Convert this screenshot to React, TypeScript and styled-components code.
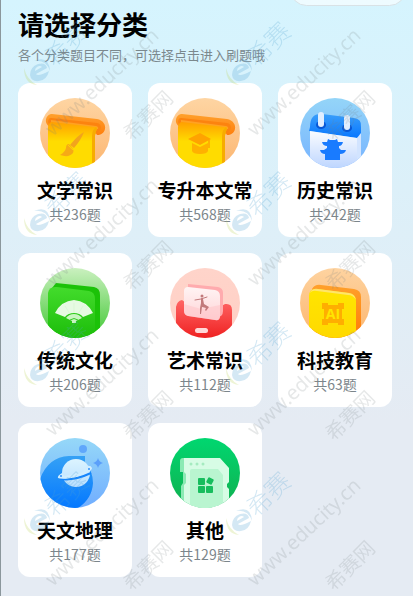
import React from 'react';
import styled, { createGlobalStyle } from 'styled-components';

const GlobalStyle = createGlobalStyle`
  *, *::before, *::after { box-sizing: border-box; }
  body {
    margin: 0;
    font-family: "Noto Sans CJK SC", sans-serif;
  }
`;

const Page = styled.main`
  position: relative;
  min-height: 100vh;
  overflow: hidden;
  padding: 7px 21px 19px 17px;
  border-left: 1px solid #8b979c;
  background: linear-gradient(180deg, #d5f4fe 0, #e5ebf3 420px) #e5ebf3;
`;

const Capsule = styled.div`
  position: absolute;
  top: -27px;
  right: 7px;
  width: 116px;
  height: 33px;
  border: 1px solid #d9e2e6;
  border-radius: 17px;
  background: rgba(255, 255, 255, 0.6);
`;

const Title = styled.h1`
  margin: 0;
  font-size: 26px;
  line-height: 34px;
  font-weight: 700;
  color: #000;
`;

const Subtitle = styled.p`
  margin: 4px 0 18px;
  font-size: 13px;
  line-height: 20px;
  color: #7b888d;
  white-space: nowrap;
`;

const Grid = styled.div`
  display: grid;
  grid-template-columns: repeat(3, 1fr);
  gap: 16px;
`;

const Card = styled.button`
  display: flex;
  flex-direction: column;
  align-items: center;
  min-width: 0;
  padding: 15px 0 12px;
  border: 0;
  border-radius: 12px;
  background: #fff;
  font-family: inherit;
  cursor: pointer;
`;

const Icon = styled.svg`
  display: block;
  width: 70px;
  height: 70px;
`;

const Name = styled.span`
  margin-top: 8px;
  font-size: 19px;
  line-height: 28px;
  font-weight: 700;
  color: #000;
  white-space: nowrap;
`;

const Count = styled.span`
  font-size: 14px;
  line-height: 21px;
  color: #7c868b;
`;

const Overlay = styled.svg`
  position: absolute;
  top: 0;
  left: 0;
  width: 100%;
  height: 100%;
  pointer-events: none;
  font-family: "Noto Sans CJK SC", sans-serif;
`;

const Grad = ({ id, from, to, end = '1' }: { id: string; from: string; to: string; end?: string }) => (
  <linearGradient id={id} x1="0" y1="0" x2="0" y2={end}>
    <stop offset="0" stopColor={from} />
    <stop offset="1" stopColor={to} />
  </linearGradient>
);

const Disc = ({ id, from, to, children }: { id: string; from: string; to: string; children: React.ReactNode }) => (
  <Icon viewBox="0 0 70 70" aria-hidden="true">
    <defs>
      <Grad id={`${id}-bg`} from={from} to={to} />
      <clipPath id={`${id}-clip`}>
        <circle cx="35" cy="35" r="35" />
      </clipPath>
    </defs>
    <g clipPath={`url(#${id}-clip)`}>
      <rect width="70" height="70" fill={`url(#${id}-bg)`} />
      {children}
    </g>
  </Icon>
);

const Scroll = ({ id, children }: { id: string; children: React.ReactNode }) => (
  <Disc id={id} from="#fed5a3" to="#fcb671">
    <defs>
      <Grad id={`${id}-paper`} from="#ff9f00" to="#ffdc00" end="0.42" />
      <Grad id={`${id}-roll`} from="#ffa02b" to="#ff7f0c" />
    </defs>
    <path d="M12 16 L57 21 C63 22 66 27 65 31 C64 35 61 37 57 37 L55 34 L10 29 C3 25 6 16 12 16Z" fill={`url(#${id}-roll)`} />
    <path d="M11 20 L57 25 C62 26 62 32 58 34 L55 36 L54 30 L10 27 C7 25 8 20 11 20Z" fill="#fc830f" />
    <path d="M11 22 L56 28 Q59 29 58 31 L54 31 L11 26Z" fill="#ffa222" />
    <path d="M8 29 Q9 24 12 24 L54 29 Q57 28 57 31 Q55 34 55 38 V70 H8Z" fill={`url(#${id}-paper)`} />
    <path d="M56 29 Q52 32 52 38 V70 H55 V38 Q55 34 57 31Z" fill="#f7ac00" />
    {children}
  </Disc>
);

const Literature = () => (
  <Scroll id="lit">
    <path d="M44 34 Q38 37 30 47 L34 50 Q41 42 44 34Z" fill="#f2a41c" />
    <path d="M29 46 Q26 46 26 50 Q25 54 20 57 Q29 60 33 55 Q34 53 33 51Z" fill="#f6aa16" />
    <path d="M28 47 L33 52" stroke="#ffd000" strokeWidth="1" />
  </Scroll>
);

const Exam = () => (
  <Scroll id="exam">
    <path d="M18 41 L30 35 L41 41 L30 47Z" fill="#ffa300" />
    <path d="M22 45 L30 49 L38 45 V53 Q37 56 30 56 Q23 56 22 53Z" fill="#ffb100" />
    <path d="M39 42 V50" stroke="#ffa300" strokeWidth="1.5" />
  </Scroll>
);

const History = () => (
  <Disc id="his" from="#94d5f8" to="#77b3ff">
    <defs>
      <Grad id="his-page" from="#fafcff" to="#bed6ff" />
      <Grad id="his-band" from="#3a9efa" to="#0877ff" />
    </defs>
    <path d="M10 29 Q10 15 22 16 L54 20 Q62 21 61 29 V37 L57 40 L9 33Z" fill="url(#his-band)" />
    <path d="M57 40 L61 35 V70 H57Z" fill="#d2e4ff" />
    <path d="M10 33 L57 40 V70 H10Z" fill="url(#his-page)" />
    <ellipse cx="21" cy="27" rx="5" ry="4" fill="#0657d7" />
    <ellipse cx="47" cy="30" rx="5" ry="4" fill="#0657d7" />
    <rect x="18" y="14" width="6" height="15" rx="3" fill="#e1eeff" />
    <rect x="44" y="17" width="6" height="15" rx="3" fill="#e1eeff" />
    <path d="M28 41 L30 42 H35 L37 41 L38 44 H43 Q42 48 39 48 V50 L41 52 H46 Q45 56 40 56 V62 H25 V56 Q21 56 20 52 H24 L27 50 V48 Q23 48 22 44 H27Z" fill="#197bff" />
  </Disc>
);

const Culture = () => (
  <Disc id="cul" from="#caf0bf" to="#41c834">
    <defs>
      <Grad id="cul-front" from="#43dc2c" to="#1cbd0a" />
    </defs>
    <path d="M12 20 L16 15 L54 19 Q60 20 60 27 V70 H12Z" fill="#1bc208" />
    <path d="M8 25 Q9 18 17 19 L49 23 Q55 24 55 31 V70 H8Z" fill="url(#cul-front)" />
    <path d="M15 45 Q21 33 34 32 Q47 33 53 45 L43 49 Q40 45 34 45 Q28 45 25 49Z" fill="#e6fae2" />
    <path d="M26 50 Q29 46 34 46 Q39 46 42 50 L36 53 V55 H32 V53Z" fill="#c8f5c0" />
    <path d="M30 52 Q34 49 38 52" fill="none" stroke="#35ca24" />
    <path d="M25 38 L30 46 M34 35 V45 M43 38 L38 46" stroke="#d5f6cf" strokeWidth="0.6" />
  </Disc>
);

const Art = () => (
  <Disc id="art" from="#ffd4ca" to="#ffcfc5">
    <defs>
      <Grad id="art-box" from="#ff6565" to="#ef2222" />
      <Grad id="art-card" from="#fff4f4" to="#ffd3d6" />
    </defs>
    <path d="M6 39 Q7 33 12 32 L20 38 L48 40 L55 36 Q62 35 62 42 V70 H6Z" fill="url(#art-box)" />
    <path d="M18 16 L48 19 Q53 20 53 25 V43 Q53 49 47 49 L18 40Z" fill="#ffabae" />
    <path d="M18 19 L45 22 Q50 23 50 28 V48 Q50 53 45 52 L18 48 Q14 47 14 43 V23 Q14 19 18 19Z" fill="url(#art-card)" />
    <path d="M14 36 L31 41 L50 37 V48 Q50 53 45 52 L18 48 Q14 47 14 43Z" fill="#ffbfc4" opacity="0.45" />
    <circle cx="32" cy="28" r="1.5" fill="#c27a7b" />
    <path d="M25 32 L31 31 L37 29" fill="none" stroke="#c27a7b" strokeWidth="1" strokeLinecap="round" />
    <path d="M31 30 L33 31 L34 36 L39 39 L36 43 L35 42 L36 40 L32 39 L31 46 H30 V40 L31 35Z" fill="#c27a7b" />
    <rect x="25" y="60" width="13" height="5" rx="2.5" fill="#ffd8d8" />
  </Disc>
);

const Tech = () => (
  <Disc id="tech" from="#fed3a0" to="#fcb66f">
    <defs>
      <Grad id="tech-back" from="#ffa02b" to="#ff7b08" />
      <Grad id="tech-front" from="#ffe500" to="#ffd900" />
    </defs>
    <path d="M12 21 Q15 16 21 17 L54 21 Q61 22 61 29 V70 H12Z" fill="url(#tech-back)" />
    <path d="M9 28 Q9 20 17 21 L49 25 Q56 26 56 33 V70 H9Z" fill="url(#tech-front)" />
    <path d="M10 25 Q12 20 18 21 L49 25 Q55 26 56 32 Q53 27 48 27 L17 23 Q12 22 10 25Z" fill="#ffe56a" />
    <path d="M22 35 H28 V37 H38 V35 H44 V41 H42 V51 H44 V57 H38 V55 H28 V57 H22 V51 H24 V41 H22Z" fill="#ffae00" />
    <text x="33" y="51" fontSize="14" fontWeight="700" fontFamily="'Open Sans', sans-serif" textAnchor="middle" fill="#ffe500">AI</text>
  </Disc>
);

const Astronomy = () => (
  <Disc id="ast" from="#96d8f8" to="#70adff">
    <defs>
      <Grad id="ast-wave" from="#35a1f5" to="#0478ff" />
      <Grad id="ast-planet" from="#dcf4ff" to="#b9dfff" />
    </defs>
    <path d="M0 41 Q8 19 29 18 H45 V25 Q53 33 53 45 Q52 61 38 70 H0Z" fill="url(#ast-wave)" />
    <circle cx="43" cy="11" r="4" fill="#60a7fb" />
    <path d="M58 20 Q59 24 63 25 Q59 26 58 30 Q57 26 53 25 Q57 24 58 20Z" fill="#5b9ffa" />
    <circle cx="36" cy="35" r="14" fill="url(#ast-planet)" />
    <path d="M20 41 Q34 43 51 35" fill="none" stroke="#1685fc" strokeWidth="2" />
    <path d="M22 35 Q17 38 18 40 Q22 42 36 39 Q52 34 52 30 Q51 27 46 28 L43 34 L24 38Z" fill="#d0edff" />
    <circle cx="21" cy="38" r="1" fill="#3191fc" />
    <circle cx="49" cy="31" r="1" fill="#3191fc" />
  </Disc>
);

const Other = () => (
  <Disc id="oth" from="#00d770" to="#11af4f">
    <path d="M10 23 Q10 20 13 20 H49 V70 H11 V48 L13 45 V34 H10Z" fill="#8beab4" />
    <path d="M14 20 H50 L59 30 V44 L57 46 V49 L59 51 V70 H14 V47 L16 45 V36 L14 34Z" fill="#d7fce5" />
    <path d="M20 33 Q20 31 22 31 H48 L53 37 V70 H20Z" fill="#b9f5d0" />
    <g fill="#a5ebc0">
      <circle cx="21" cy="26" r="1.5" />
      <circle cx="27" cy="26" r="1.5" />
      <circle cx="33" cy="26" r="1.5" />
    </g>
    <g fill="#16bd5d">
      <rect x="28" y="40" width="7" height="7" rx="1" />
      <rect x="37" y="40" width="6" height="6" rx="1" transform="rotate(28 40 43)" />
      <rect x="28" y="48" width="7" height="7" rx="1" />
      <rect x="36" y="48" width="7" height="7" rx="1" />
    </g>
  </Disc>
);

const Watermark = () => (
  <Overlay aria-hidden="true">
    <defs>
      <pattern id="mark" x="-1" width="202" height="150" patternUnits="userSpaceOnUse">
        <g opacity="0.24" fill="#4a9fd0" transform="translate(39 72)">
          <path d="M-9 3 Q-9 -5 -1 -8 Q7 -10 8 -4 L-3 2 Q-1 5 10 -1 Q8 8 0 9 Q-8 10 -9 3Z M-4 -1 L3 -5 Q1 -7 -2 -5 Q-4 -4 -4 -1Z" fillRule="evenodd" />
          <path d="M-15 -4 Q-15 12 -2 13 Q-12 8 -15 -4Z" fill="#b7cf4e" />
          <path d="M-5 -11 Q10 -17 11 -1 Q7 -13 -5 -11Z" />
          <text x="14" y="9" fontSize="25" fontWeight="300" transform="rotate(-45)">希赛</text>
        </g>
        <g opacity="0.18" fill="#737c80">
          <text fontSize="20" fontFamily="'Noto Sans', sans-serif" transform="translate(53 137) rotate(-43)">www.educity.cn</text>
          <text fontSize="20" transform="translate(132 142) rotate(-45)">希赛网</text>
        </g>
      </pattern>
    </defs>
    <rect width="100%" height="100%" fill="url(#mark)" />
  </Overlay>
);

const categories = [
  { name: '文学常识', count: 236, Picture: Literature },
  { name: '专升本文常', count: 568, Picture: Exam },
  { name: '历史常识', count: 242, Picture: History },
  { name: '传统文化', count: 206, Picture: Culture },
  { name: '艺术常识', count: 112, Picture: Art },
  { name: '科技教育', count: 63, Picture: Tech },
  { name: '天文地理', count: 177, Picture: Astronomy },
  { name: '其他', count: 129, Picture: Other },
];

export default function App() {
  return (
    <>
      <GlobalStyle />
      <Page lang="zh-CN">
        <Capsule />
        <Title>请选择分类</Title>
        <Subtitle>各个分类题目不同，可选择点击进入刷题哦</Subtitle>
        <Grid>
          {categories.map(({ name, count, Picture }) => (
            <Card key={name} type="button">
              <Picture />
              <Name>{name}</Name>
              <Count>共{count}题</Count>
            </Card>
          ))}
        </Grid>
        <Watermark />
      </Page>
    </>
  );
}
